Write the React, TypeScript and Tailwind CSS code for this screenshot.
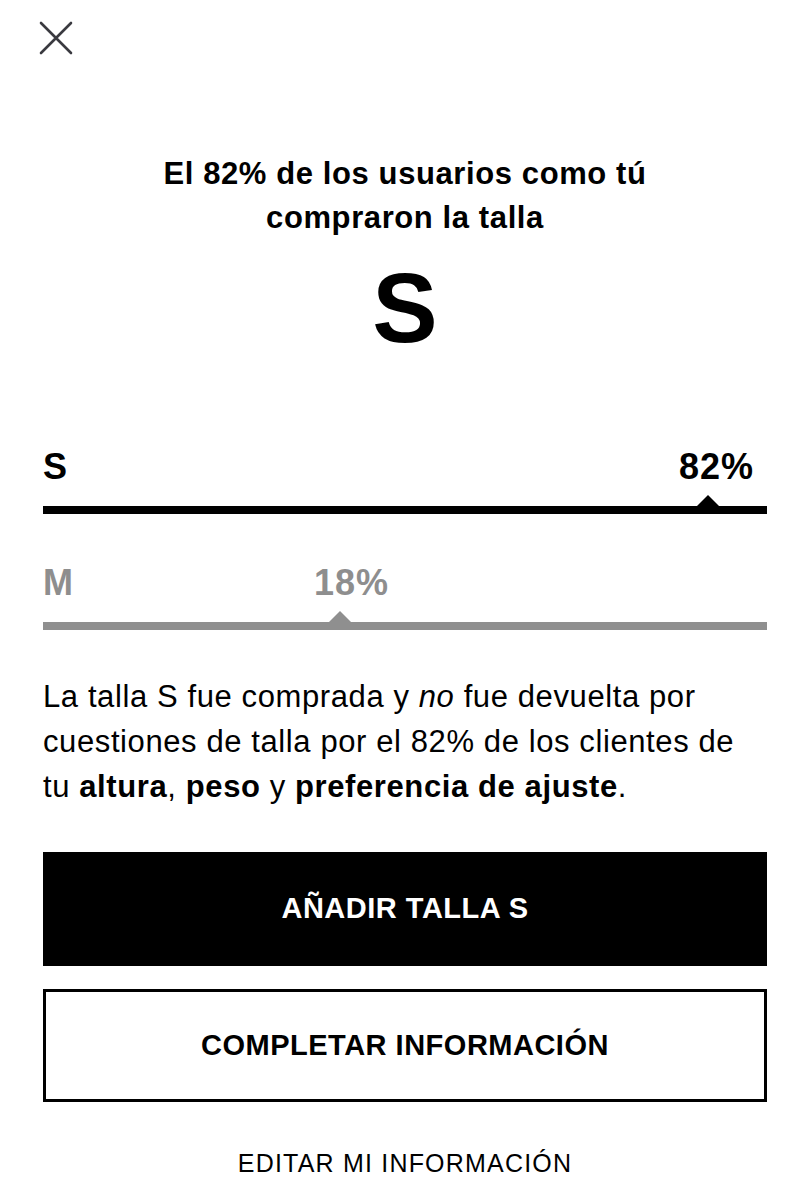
import React from "react";

type Row = {
  size: string;
  pct: string;
  pctLeft: number;
  markerLeft: number;
  active: boolean;
};

const rows: Row[] = [
  { size: "S", pct: "82%", pctLeft: 636, markerLeft: 665, active: true },
  { size: "M", pct: "18%", pctLeft: 271, markerLeft: 297, active: false },
];

function SizeRow({ row, first }: { row: Row; first: boolean }) {
  const color = row.active ? "text-black" : "text-[#8e8e8e]";
  const bar = row.active ? "bg-black" : "bg-[#8f8f8f]";
  const tri = row.active ? "border-b-black" : "border-b-[#8f8f8f]";
  return (
    <div className={first ? "mt-[90px]" : "mt-[49px]"}>
      <div className={`relative h-[40px] text-[36px] leading-[40px] font-bold tracking-[1px] ${color}`}>
        <span>{row.size}</span>
        <span className="absolute top-0" style={{ left: row.pctLeft }}>
          {row.pct}
        </span>
      </div>
      <div className={`relative mt-[19px] h-[8px] ${bar}`}>
        <div
          className={`absolute bottom-[7px] h-0 w-0 border-x-[12px] border-b-[12px] border-x-transparent ${tri}`}
          style={{ left: row.markerLeft - 12 }}
        />
      </div>
    </div>
  );
}

export default function App() {
  return (
    <div
      className="min-h-[1186px] w-[810px] bg-white text-black"
      style={{ fontFamily: '"Liberation Sans", Arial, sans-serif' }}
    >
      <div className="pl-[38px] pt-[20px]">
        <svg width="36" height="36" viewBox="0 0 36 36" fill="none">
          <path d="M3 3 L33 33 M33 3 L3 33" stroke="#3a3a40" strokeWidth="2.6" strokeLinecap="round" />
        </svg>
      </div>

      <div className="px-[43px]">
        <h1 className="mt-[96px] text-center text-[31px] font-bold leading-[44px] tracking-[0.6px]">
          El 82% de los usuarios como tú
          <br />
          compraron la talla
        </h1>

        <div className="mt-[19px] text-center text-[98px] font-bold leading-[98px]">S</div>

        {rows.map((r, i) => (
          <SizeRow key={r.size} row={r} first={i === 0} />
        ))}

        <p className="mt-[44px] text-[31px] leading-[45px] tracking-[0.6px]">
          La talla S fue comprada y <em>no</em> fue devuelta por
          <br />
          cuestiones de talla por el 82% de los clientes de
          <br />
          tu <strong>altura</strong>, <strong>peso</strong> y <strong>preferencia de ajuste</strong>.
        </p>

        <button className="mt-[43px] flex h-[114px] w-full items-center justify-center bg-black text-[29px] font-bold tracking-[0.5px] text-white">
          AÑADIR TALLA S
        </button>

        <button className="mt-[23px] flex h-[113px] w-full items-center justify-center border-[3px] border-black bg-white text-[29px] font-bold tracking-[0.5px] text-black">
          COMPLETAR INFORMACIÓN
        </button>

        <div className="mt-[46px] text-center text-[25px] leading-[30px] tracking-[1.2px]">
          EDITAR MI INFORMACIÓN
        </div>
      </div>
    </div>
  );
}
